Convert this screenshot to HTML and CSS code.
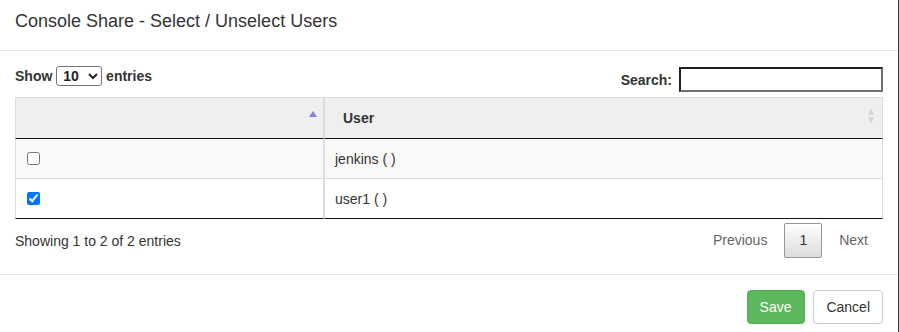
FILE: index.html
```html
<!DOCTYPE html>
<html lang="en">

<head>
    <meta charset="UTF-8">
    <meta name="viewport" content="width=device-width, initial-scale=1.0">
    <title>Console Share</title>
    <link rel="stylesheet" href="styles.css">
</head>

<body>
    <div class="modal">
        <div class="modal-header">
            <h4 class="modal-title">Console Share - Select / Unselect Users</h4>
        </div>
        <div class="modal-body">
            <div class="dt-top">
                <label class="dt-length">Show <select class="length-select">
                        <option>10</option>
                        <option>25</option>
                        <option>50</option>
                        <option>100</option>
                    </select> entries</label>
                <label class="dt-filter">Search:<input type="search" class="search-input"></label>
            </div>
            <table class="dt">
                <thead>
                    <tr>
                        <th class="check-col sorting-asc"></th>
                        <th class="sorting">User</th>
                    </tr>
                </thead>
                <tbody>
                    <tr class="odd">
                        <td class="check-col"><input type="checkbox" class="row-check"></td>
                        <td>jenkins ( )</td>
                    </tr>
                    <tr class="even">
                        <td class="check-col"><input type="checkbox" class="row-check" checked></td>
                        <td>user1 ( )</td>
                    </tr>
                </tbody>
            </table>
            <div class="dt-bottom">
                <div class="dt-info">Showing 1 to 2 of 2 entries</div>
                <div class="dt-paginate">
                    <span class="page-btn disabled">Previous</span>
                    <span class="page-btn current">1</span>
                    <span class="page-btn disabled">Next</span>
                </div>
            </div>
        </div>
        <div class="modal-footer">
            <button class="btn btn-success">Save</button>
            <button class="btn btn-default">Cancel</button>
        </div>
    </div>
</body>

</html>
```
FILE: styles.css
```css
* {
    margin: 0;
    padding: 0;
    box-sizing: border-box;
}

body {
    background-color: #3c3c3c;
    font-family: "Liberation Sans", Arial, sans-serif;
    font-size: 14px;
    line-height: 20px;
    color: #333333;
    overflow: hidden;
}

.modal {
    width: 898px;
    background-color: #ffffff;
}

.modal-header {
    padding: 11px 15px 19px;
    border-bottom: 1px solid #e5e5e5;
}

.modal-title {
    font-size: 18px;
    font-weight: normal;
    line-height: 20px;
}

.modal-body {
    padding: 15px 15px 16px;
}

/* top controls */
.dt-top {
    display: flex;
    justify-content: space-between;
    height: 26px;
    margin-bottom: 5px;
}

.dt-length,
.dt-filter {
    font-weight: bold;
}

.length-select {
    width: 46px;
    height: 20px;
    vertical-align: top;
    font-family: "Liberation Sans", Arial, sans-serif;
    font-size: 14px;
    font-weight: bold;
    color: #222222;
    border: 1px solid #767676;
    border-radius: 3px;
    padding: 0 0 0 2px;
    background-color: #ffffff;
}

.dt-filter {
    display: flex;
    align-items: center;
    margin-top: 1px;
    height: 25px;
}

.search-input {
    width: 204px;
    height: 25px;
    margin-left: 7px;
    border: 2px solid;
    border-color: #1f1f1f #6f6f6f #6f6f6f #1f1f1f;
    background-color: #ffffff;
}

/* table */
.dt {
    width: 100%;
    border-collapse: separate;
    border-spacing: 0;
}

.dt th {
    position: relative;
    height: 41px;
    padding: 10px 18px;
    text-align: left;
    font-weight: bold;
    background-color: #efefef;
    border-top: 1px solid #dddddd;
    border-right: 1px solid #dddddd;
    border-bottom: 1px solid #111111;
}

.dt td {
    vertical-align: top;
    padding: 10px 10px 9px;
    border-right: 1px solid #dddddd;
}

.dt .check-col {
    width: 310px;
    border-left: 1px solid #dddddd;
    border-right: 2px solid #dddddd;
}

.dt tr.odd td {
    background-color: #f9f9f9;
}

.dt tr.even td {
    border-top: 1px solid #dddddd;
    border-bottom: 1px solid #111111;
    background-color: #ffffff;
}

.row-check {
    display: block;
    width: 13px;
    height: 13px;
    margin: 3px 0 0 1px;
}

/* sort arrows */
.sorting-asc::after {
    content: "";
    position: absolute;
    top: 13px;
    right: 6px;
    border-left: 4px solid transparent;
    border-right: 4px solid transparent;
    border-bottom: 6px solid #8080e0;
}

.sorting::before,
.sorting::after {
    content: "";
    position: absolute;
    right: 8px;
    border-left: 3px solid transparent;
    border-right: 3px solid transparent;
}

.sorting::before {
    top: 10px;
    border-bottom: 7px solid #d6d6d6;
}

.sorting::after {
    top: 19px;
    border-top: 7px solid #d6d6d6;
}

/* bottom controls */
.dt-bottom {
    display: flex;
    justify-content: space-between;
}

.dt-info {
    padding-top: 12px;
}

.dt-paginate {
    display: flex;
    padding-top: 4px;
}

.page-btn {
    display: inline-block;
    padding: 7px 14px;
    line-height: 19px;
    margin-left: 2px;
    border: 1px solid transparent;
    border-radius: 2px;
}

.page-btn.disabled {
    color: #666666;
}

.page-btn.current {
    color: #333333;
    border: 1px solid #979797;
    background: linear-gradient(to bottom, #ffffff 0%, #dcdcdc 100%);
}

/* footer */
.modal-footer {
    padding: 15px;
    text-align: right;
    border-top: 1px solid #e5e5e5;
}

.btn {
    display: inline-block;
    padding: 6px 12px;
    font-family: "Liberation Sans", Arial, sans-serif;
    font-size: 14px;
    line-height: 20px;
    border: 1px solid transparent;
    border-radius: 4px;
}

.btn + .btn {
    margin-left: 5px;
}

.btn-success {
    color: #ffffff;
    background-color: #5cb85c;
    border-color: #4cae4c;
}

.btn-default {
    color: #333333;
    background-color: #ffffff;
    border-color: #cccccc;
}
```
